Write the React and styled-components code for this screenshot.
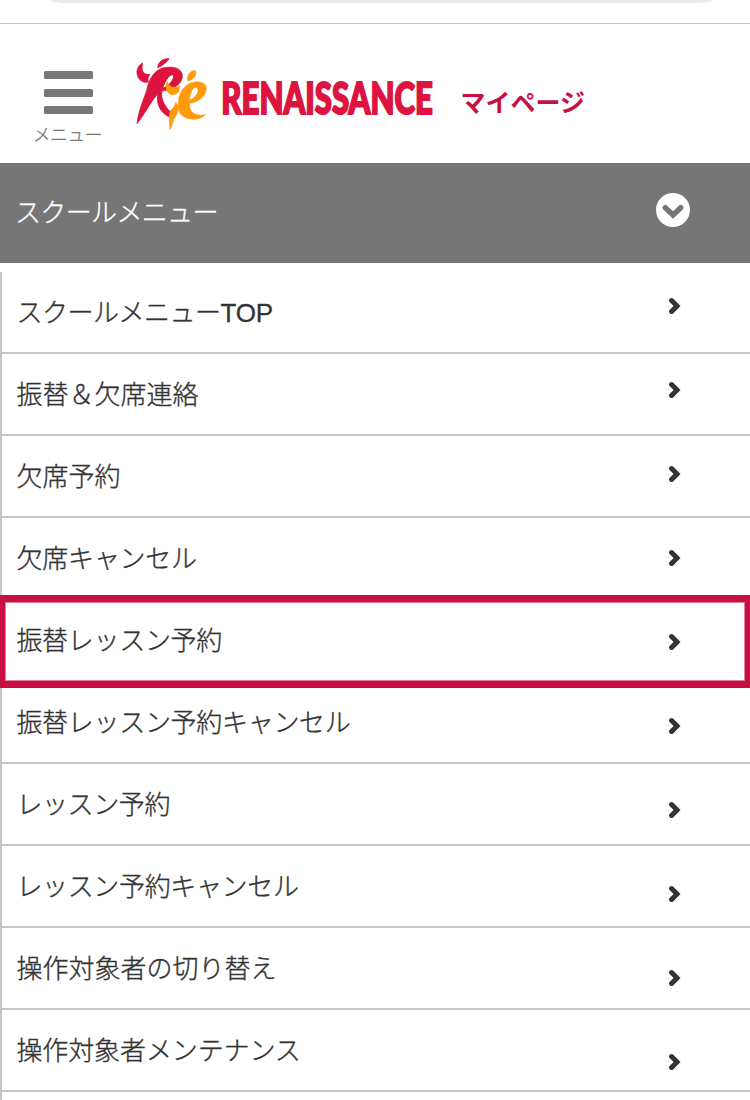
import React from "react";
import styled, { createGlobalStyle } from "styled-components";

const GlobalStyle = createGlobalStyle`
  * { box-sizing: border-box; }
  html, body { margin: 0; padding: 0; background: #fff; }
  body {
    height: 1100px;
    overflow: hidden;
    font-family: "Liberation Sans", "Noto Sans CJK JP", sans-serif;
    color: #333;
  }
`;

const Page = styled.div`
  width: 750px;
  height: 1100px;
  overflow: hidden;
  background: #fff;
`;

const BrowserEdge = styled.div`
  height: 24px;
  border-bottom: 1px solid #c8c8c8;
  padding: 0 38px 0 50px;
`;

const AddressBar = styled.div`
  height: 3px;
  background: #e9e9eb;
  border-radius: 0 0 18px 18px / 0 0 3px 3px;
`;

const Header = styled.header`
  height: 139px;
  display: flex;
  align-items: flex-start;
`;

const MenuButton = styled.button`
  width: 70px;
  margin: 47px 0 0 33px;
  padding: 0;
  border: 0;
  background: none;
  display: flex;
  flex-direction: column;
  align-items: center;
  gap: 9.7px;
  font-family: "Noto Sans CJK JP", sans-serif;
  color: #777;
`;

const MenuBar = styled.span`
  width: 49px;
  height: 8px;
  border-radius: 1.5px;
  background: #777;
`;

const MenuLabel = styled.span`
  font-size: 17.5px;
  line-height: 20px;
  font-weight: 300;
  letter-spacing: -0.2px;
  margin-left: -1px;
  white-space: nowrap;
  -webkit-text-stroke: 0.3px currentColor;
`;

const Brand = styled.div`
  display: flex;
  margin: 26px 0 0 22px;
`;

const BrandName = styled.svg`
  width: 220px;
  height: 85px;
  margin-left: -8px;
  overflow: visible;
`;

const PageName = styled.span`
  margin: 60px 0 0 23.5px;
  font: 700 25px/34px "Noto Sans CJK JP", sans-serif;
  color: #c90f41;
`;

const SectionBar = styled.div`
  height: 100px;
  padding: 0 60px 6px 15px;
  display: flex;
  align-items: center;
  justify-content: space-between;
  background: #767676;
  color: #fff;
  font: 300 26px/38px "Noto Sans CJK JP", sans-serif;
`;

const SectionTitle = styled.span`
  padding-top: 1px;
  letter-spacing: -0.65px;
  -webkit-text-stroke: 0.35px currentColor;
`;

const Menu = styled.nav`
  display: grid;
  grid-template-columns: 1fr 81px;
  margin-top: 9px;
  height: 828px;
  border-left: 2px solid #c6c6c6;
`;

const Rows = styled.ul`
  grid-area: 1 / 1 / 2 / 3;
  list-style: none;
  margin: 0;
  padding: 0;
`;

const Row = styled.li`
  position: relative;
  height: 82px;
  padding: 2px 14px 0 14.4px;
  display: flex;
  align-items: center;
  border-bottom: 2px solid #c6c6c6;
  font-size: 26px;
  line-height: 38px;
  font-weight: 300;
  letter-spacing: ${(p) => p.$tracking}px;
`;

const Kana = styled.span`
  -webkit-text-stroke: 0.35px currentColor;
`;

const Latin = styled.span`
  letter-spacing: -0.1px;
  -webkit-text-stroke: 0.3px currentColor;
`;

const Highlight = styled.span`
  position: absolute;
  inset: -5px 0 -8px -2px;
  border: solid #c90f41;
  border-width: 7px 5px;
  box-shadow: inset 0 0 0 1px #df8199;
`;

const Arrows = styled.div`
  grid-area: 1 / 2 / 2 / 3;
  display: flex;
  flex-direction: column;
  padding-top: 24px;
  gap: 64px;
`;

const ArrowIcon = styled.svg`
  display: block;
  flex: none;
  width: 12px;
  height: 20px;
`;

const items = [
  { label: "スクールメニュー", latin: "TOP", tracking: -0.5 },
  { label: "振替＆欠席連絡", tracking: 0 },
  { label: "欠席予約", tracking: 0 },
  { label: "欠席キャンセル", tracking: -0.25 },
  { label: "振替レッスン予約", tracking: -0.3 },
  { label: "振替レッスン予約キャンセル", tracking: -0.3 },
  { label: "レッスン予約", tracking: -0.4 },
  { label: "レッスン予約キャンセル", tracking: -0.35 },
  { label: "操作対象者の切り替え", tracking: 0 },
  { label: "操作対象者メンテナンス", tracking: -0.1 },
];

const highlightedLabel = "振替レッスン予約";

function LogoMark() {
  return (
    <svg width="100" height="85" viewBox="0 0 300 255">
      <g fill="#dc143f" stroke="#dc143f" strokeWidth="2.5" strokeLinejoin="round">
        <path d="M98 53 C100 37 110 25 132 26 C126 37 113 46 98 53Z" />
        <path d="M53 39 C44 43 35 54 36 70 C39 90 53 100 70 96 C67 88 69 80 75 73 C58 77 46 63 53 39Z" />
        <path
          fillRule="evenodd"
          d="M36 221 C40 184 54 153 65 122 C70 91 86 62 113 54 C143 47 170 54 172 76 C173 99 151 118 111 123 C105 145 121 176 145 192 L141 204 C108 193 93 165 98 131 C75 158 61 190 36 221Z M113 115 C132 108 149 87 145 76 C138 70 123 84 113 115Z"
        />
      </g>
      <g fill="#ff9b0b" stroke="#ff9b0b" strokeWidth="1.5" strokeLinejoin="round">
        <path d="M188 93 C185 75 196 60 211 62 C217 76 205 90 188 93Z" />
        <path d="M126 94 C120 108 123 125 134 132 C144 137 157 133 162 124 L165 107 C149 117 133 112 126 94Z" />
        <path
          fillRule="evenodd"
          d="M160 153 C164 120 184 97 216 95 C241 96 247 109 243 124 C238 143 217 157 195 160 C190 182 206 201 241 194 C226 211 191 212 173 198 C160 188 158 170 160 153Z M194 150 C212 143 224 125 217 114 C206 107 194 128 194 150Z"
        />
        <path d="M152 156 C150 174 133 179 133 195 L134 239 C141 234 141 215 150 202 C159 189 162 177 159 167Z" />
      </g>
    </svg>
  );
}

export default function App() {
  return (
    <Page>
      <GlobalStyle />
      <BrowserEdge>
        <AddressBar />
      </BrowserEdge>
      <Header>
        <MenuButton>
          <MenuBar />
          <MenuBar />
          <MenuBar />
          <MenuLabel>メニュー</MenuLabel>
        </MenuButton>
        <Brand>
          <LogoMark />
          <BrandName viewBox="0 0 220 85">
            <g transform="translate(4.3 63.7) scale(0.74 1)">
              <text
                x="0"
                y="0"
                fontFamily="Lato"
                fontWeight="900"
                fontSize="42.8"
                fill="#dc143f"
                stroke="#dc143f"
                strokeWidth="2"
                textLength="286"
                lengthAdjust="spacingAndGlyphs"
              >
                RENAISSANCE
              </text>
            </g>
          </BrandName>
        </Brand>
        <PageName>マイページ</PageName>
      </Header>
      <SectionBar>
        <SectionTitle>スクールメニュー</SectionTitle>
        <svg width="34" height="34" viewBox="0 0 34 34">
          <circle cx="17" cy="17" r="17" fill="#fff" />
          <path
            d="M9.3 14.7 L17 22 L24.7 14.7"
            fill="none"
            stroke="#767676"
            strokeWidth="5.4"
            strokeLinecap="round"
          />
        </svg>
      </SectionBar>
      <Menu>
        <Rows>
          {items.map(({ label, latin, tracking }) => (
            <Row key={label} $tracking={tracking}>
              <Kana>{label}</Kana>
              {latin && <Latin>{latin}</Latin>}
              {label === highlightedLabel && <Highlight />}
            </Row>
          ))}
        </Rows>
        <Arrows>
          {items.map(({ label }) => (
            <ArrowIcon key={label} viewBox="0 0 12 20">
              <path
                d="M2.6 4.6 L8 10 L2.6 15.4"
                fill="none"
                stroke="#333"
                strokeWidth="5"
                strokeLinecap="round"
              />
            </ArrowIcon>
          ))}
        </Arrows>
      </Menu>
    </Page>
  );
}
